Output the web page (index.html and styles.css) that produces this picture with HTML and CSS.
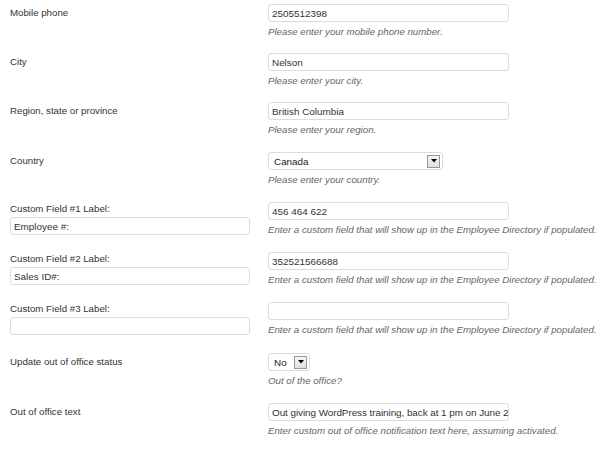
FILE: index.html
```html
<!DOCTYPE html>
<html>
<head>
<meta charset="utf-8">
<link rel="stylesheet" href="styles.css">
</head>
<body>
<div class="form">
  <div class="row">
    <div class="th"><label>Mobile phone</label></div>
    <div class="td"><input class="text" type="text" value="2505512398"><p class="desc">Please enter your mobile phone number.</p></div>
  </div>
  <div class="row">
    <div class="th"><label>City</label></div>
    <div class="td"><input class="text" type="text" value="Nelson"><p class="desc">Please enter your city.</p></div>
  </div>
  <div class="row tall">
    <div class="th"><label>Region, state or province</label></div>
    <div class="td"><input class="text" type="text" value="British Columbia"><p class="desc">Please enter your region.</p></div>
  </div>
  <div class="row tall">
    <div class="th"><label>Country</label></div>
    <div class="td">
      <div class="select country"><span class="sel-val">Canada</span><span class="sel-btn"><svg width="6" height="4" viewBox="0 0 6 4"><path d="M0 0h6L3 3.5z" fill="#000"/></svg></span></div>
      <p class="desc">Please enter your country.</p>
    </div>
  </div>
  <div class="row tall custom">
    <div class="th"><label>Custom Field #1 Label:</label><input class="text left" type="text" value="Employee #:"></div>
    <div class="td"><input class="text" type="text" value="456 464 622"><p class="desc">Enter a custom field that will show up in the Employee Directory if populated.</p></div>
  </div>
  <div class="row tall custom">
    <div class="th"><label>Custom Field #2 Label:</label><input class="text left" type="text" value="Sales ID#:"></div>
    <div class="td"><input class="text" type="text" value="352521566688"><p class="desc">Enter a custom field that will show up in the Employee Directory if populated.</p></div>
  </div>
  <div class="row taller custom">
    <div class="th"><label>Custom Field #3 Label:</label><input class="text left" type="text" value=""></div>
    <div class="td"><input class="text" type="text" value=""><p class="desc">Enter a custom field that will show up in the Employee Directory if populated.</p></div>
  </div>
  <div class="row tall">
    <div class="th"><label>Update out of office status</label></div>
    <div class="td">
      <div class="select small"><span class="sel-val">No</span><span class="sel-btn"><svg width="6" height="4" viewBox="0 0 6 4"><path d="M0 0h6L3 3.5z" fill="#000"/></svg></span></div>
      <p class="desc">Out of the office?</p>
    </div>
  </div>
  <div class="row tall">
    <div class="th"><label>Out of office text</label></div>
    <div class="td"><input class="text tight" type="text" value="Out giving WordPress training, back at 1 pm on June 2"><p class="desc">Enter custom out of office notification text here, assuming activated.</p></div>
  </div>
</div>
</body>
</html>
```
FILE: styles.css
```css
* { box-sizing: border-box; }
html, body { margin: 0; padding: 0; background: #fff; }
body {
  font-family: "Liberation Sans", Arial, sans-serif;
  font-size: 9.7px;
  color: #333;
  overflow: hidden;
}
.form {
  padding: 4px 0 0 10px;
}
.row {
  display: grid;
  grid-template-columns: 258px 1fr;
  padding-bottom: 15px;
}
.row.tall { padding-bottom: 16px; }
.row.taller { padding-bottom: 17px; }
.th {
  padding-top: 2px;
  line-height: 13px;
}
.row.custom .th { padding-top: 0; }
.th label { display: block; color: #333; }
.td { min-width: 0; }
.text {
  display: block;
  width: 241px;
  height: 18px;
  margin: 0;
  padding: 0 2px 0 3px;
  border: 1px solid #dcdcdc;
  border-radius: 3px;
  background: #fff;
  font-family: "Liberation Sans", Arial, sans-serif;
  font-size: 9.9px;
  color: #333;
  outline: none;
}
.text.tight { padding-right: 0; letter-spacing: -0.05px; }
.text.left { width: 240px; margin-top: 2px; }
.desc {
  margin: 3px 0 0;
  line-height: 13px;
  font-size: 9.7px;
  font-style: italic;
  color: #666;
  white-space: nowrap;
}
.select {
  display: flex;
  align-items: center;
  justify-content: space-between;
  height: 18px;
  border: 1px solid #dcdcdc;
  border-radius: 3px;
  padding: 0 2px 0 5px;
  background: #fff;
  color: #222;
  font-size: 9.9px;
}
.select.country { width: 175px; }
.select.small { width: 42px; }
.sel-btn {
  width: 13px;
  height: 13px;
  border: 1px solid #999;
  background: linear-gradient(#f6f6f6, #dedede);
  display: flex;
  align-items: center;
  justify-content: center;
}
.sel-btn svg { display: block; }
```
